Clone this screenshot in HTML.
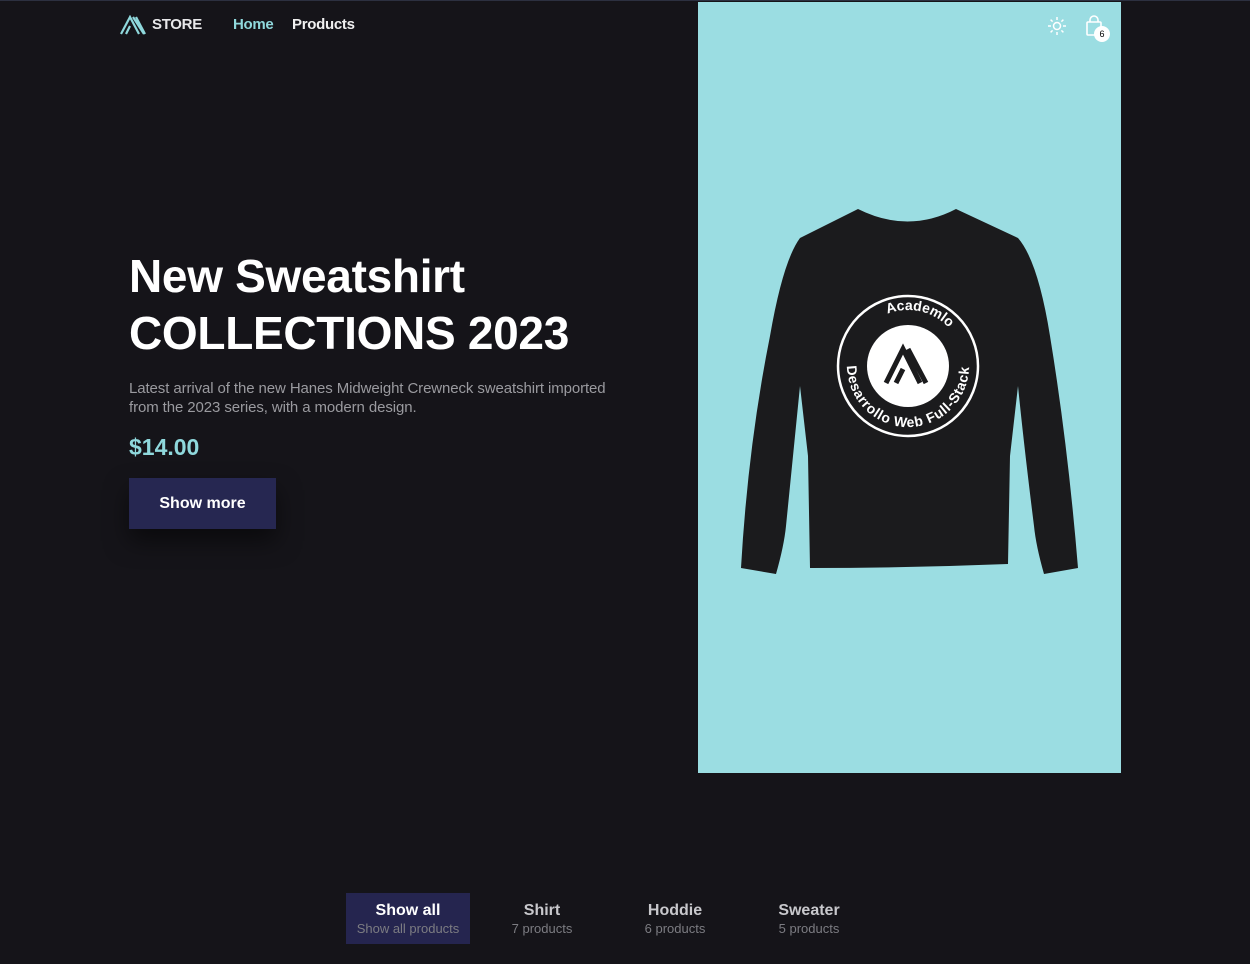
<!DOCTYPE html>
<html><head><meta charset="utf-8"><style>
*{margin:0;padding:0;box-sizing:border-box}
body{width:1250px;height:964px;background:#151419;font-family:"Liberation Sans",Arial,sans-serif;position:relative;overflow:hidden;border-top:1px solid #2c3040}
.a{position:absolute}
.panel{left:698px;top:1px;width:423px;height:771px;background:#9bdde2}
.nav{top:15px;font-weight:bold;font-size:15px;letter-spacing:-0.3px}
h1{position:absolute;left:129px;top:247px;color:#fff;font-size:46px;line-height:57px;font-weight:bold;letter-spacing:-0.3px}
.desc{left:129px;top:378px;width:490px;color:#9a9a9f;font-size:15px;line-height:19px;letter-spacing:-0.1px}
.price{left:129px;top:433px;color:#8fd8dc;font-size:23px;font-weight:bold}
.btn{left:129px;top:477px;width:147px;height:51px;background:#262751;color:#fff;font-weight:bold;font-size:16px;text-align:center;line-height:51px;box-shadow:0 12px 24px rgba(0,0,0,.5)}
.tab{top:892px;height:51px;text-align:center;color:#c8c8cc;padding-top:9px}
.tab b{display:block;font-size:16px}
.tab span{display:block;font-size:13px;color:#7c7c82;margin-top:1px}
</style></head><body>
<div class="a panel"></div>
<svg class="a" style="left:120px;top:14px" width="26" height="20" viewBox="0 0 26 20"><path d="M1 19 L10 2 L19 19 M6 19 L10 11 M13 2 L24 19 M16 2 L25 19" stroke="#8fd8dc" stroke-width="2.2" fill="none"/></svg>
<div class="a nav" style="left:152px;color:#e8e8ea">STORE</div>
<div class="a nav" style="left:233px;color:#8fd8dc">Home</div>
<div class="a nav" style="left:292px;color:#f0f0f0">Products</div>
<svg class="a" style="left:1047px;top:15px" width="20" height="20" viewBox="0 0 20 20"><circle cx="10" cy="10" r="3.5" fill="none" stroke="#fff" stroke-width="1.5"/><g stroke="#fff" stroke-width="1.5"><path d="M10 1v3M10 16v3M1 10h3M16 10h3M3.6 3.6l2 2M14.4 14.4l2 2M3.6 16.4l2-2M14.4 5.6l2-2"/></g></svg>
<svg class="a" style="left:1085px;top:14px" width="20" height="22" viewBox="0 0 20 22"><rect x="2" y="7" width="14" height="13" rx="1" fill="none" stroke="#fff" stroke-width="1.6"/><path d="M5 7V5a4 4 0 0 1 8 0v2" fill="none" stroke="#fff" stroke-width="1.6"/></svg>
<div class="a" style="left:1094px;top:25px;width:16px;height:16px;border-radius:50%;background:#fff;color:#000;font-size:9px;text-align:center;line-height:16px">6</div>
<svg class="a" style="left:738px;top:205px" width="345" height="372" viewBox="0 0 345 372">
<path d="M120 3 Q170 28 218 3 L280 32 Q300 55 312 130 Q330 240 340 362 L306 368 Q298 340 296 320 Q286 240 280 180 L272 250 L270 358 Q170 362 72 362 L70 250 L62 180 Q56 240 48 320 Q46 340 38 368 L3 362 Q10 240 32 130 Q45 55 62 32 Z" fill="#1b1b1d"/>
<defs><path id="c" d="M170 160 m-56 0 a56 56 0 1 1 112 0 a56 56 0 1 1 -112 0"/><path id="d" d="M170 160 m-61 0 a61 61 0 1 0 122 0"/></defs>
<circle cx="170" cy="160" r="70" fill="none" stroke="#fff" stroke-width="2.5"/>
<circle cx="170" cy="160" r="41" fill="#fff"/>
<path d="M148 177 L165 143 L182 177 M158 177 L165 163 M170 143 L188 177" stroke="#1b1b1d" stroke-width="5" fill="none"/>
<text fill="#fff" font-size="14" font-weight="bold"><textPath href="#c" startOffset="19%">Academlo</textPath></text>
<text fill="#fff" font-size="14" font-weight="bold"><textPath href="#d" startOffset="0%" textLength="190">Desarrollo Web Full-Stack</textPath></text>
</svg>
<h1>New Sweatshirt<br>COLLECTIONS 2023</h1>
<div class="a desc">Latest arrival of the new Hanes Midweight Crewneck sweatshirt imported from the 2023 series, with a modern design.</div>
<div class="a price">$14.00</div>
<div class="a btn">Show more</div>
<div class="a tab" style="left:346px;width:124px;background:#25254f;color:#fff"><b>Show all</b><span>Show all products</span></div>
<div class="a tab" style="left:492px;width:100px"><b>Shirt</b><span>7 products</span></div>
<div class="a tab" style="left:625px;width:100px"><b>Hoddie</b><span>6 products</span></div>
<div class="a tab" style="left:759px;width:100px"><b>Sweater</b><span>5 products</span></div>
</body></html>
